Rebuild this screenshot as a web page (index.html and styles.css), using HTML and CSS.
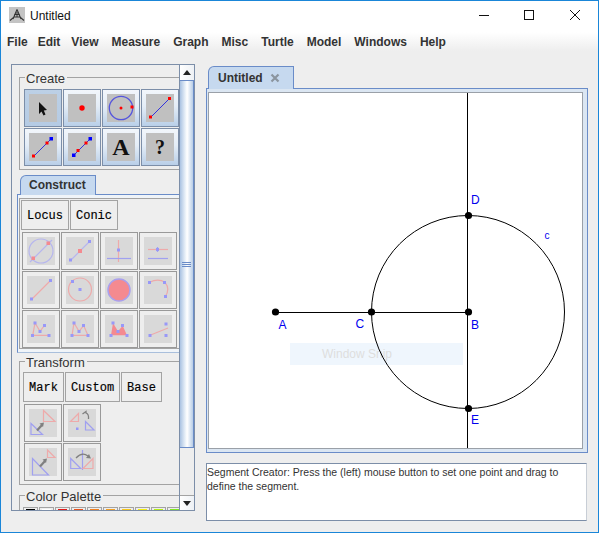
FILE: index.html
```html
<!DOCTYPE html>
<html lang="en">
<head>
<meta charset="utf-8">
<title>Untitled</title>
<link rel="stylesheet" href="styles.css">
</head>
<body>
<div class="window">
  <header class="titlebar">
    <svg class="app-icon" viewBox="0 0 16 16"><rect width="16" height="16" fill="#c4c4c4"/><path d="M8 2.500 L4 12 M8 2.500 L12 12 M1 13.500 L5 10 H11 L15 13.500" fill="none" stroke="#333" stroke-width="1.100"/><path d="M5.500 7.500 H10.500 M8 5 V10" fill="none" stroke="#333" stroke-width="1"/></svg>
    <span class="title-text">Untitled</span>
    <div class="win-controls">
      <svg class="win-btn win-min" viewBox="0 0 10 10"><path d="M0 5.500 H10" stroke="#111" fill="none"/></svg>
      <svg class="win-btn" viewBox="0 0 10 10"><rect x="0.500" y="0.500" width="9" height="9" stroke="#111" fill="none"/></svg>
      <svg class="win-btn" viewBox="0 0 10 10"><path d="M0 0 L10 10 M10 0 L0 10" stroke="#111" fill="none"/></svg>
    </div>
  </header>
  <nav class="menubar">
    <span class="m-file">File</span><span class="m-edit">Edit</span><span>View</span><span>Measure</span><span>Graph</span><span>Misc</span><span>Turtle</span><span>Model</span><span>Windows</span><span>Help</span>
  </nav>
  <main class="main">
    <aside class="toolpane">
      <div class="toolscroll">
        <section class="group group-create">
          <div class="legend">Create</div>
          <div class="icon-grid">
            <div class="tool selected"><svg class="ic" viewBox="0 0 28 28"><path d="M10 8 V20 L12.500 17.500 L14.500 21.500 L16.500 20.500 L14.800 16.500 L18 16 Z" fill="#111"/></svg></div>
            <div class="tool"><svg class="ic" viewBox="0 0 28 28"><circle cx="14" cy="14" r="2.700" fill="#f00"/></svg></div>
            <div class="tool"><svg class="ic" viewBox="0 0 28 28"><circle cx="14" cy="14" r="11.700" fill="none" stroke="#5555dd" stroke-width="1.300"/><circle cx="14" cy="14" r="1.500" fill="#f00"/><rect x="23.500" y="11.500" width="3" height="3" fill="#f00"/></svg></div>
            <div class="tool"><svg class="ic" viewBox="0 0 28 28"><path d="M5 23 L23 5" stroke="#3333dd" fill="none"/><rect x="3" y="21.500" width="3" height="3" fill="#f00"/><rect x="22" y="3" width="3" height="3" fill="#f00"/></svg></div>
            <div class="tool"><svg class="ic" viewBox="0 0 28 28"><path d="M5 23 L22 6" stroke="#3333dd" fill="none"/><rect x="3" y="21.500" width="3" height="3" fill="#f00"/><rect x="16.500" y="8.500" width="3" height="3" fill="#f00"/><rect x="20.500" y="4" width="3.500" height="3.500" fill="#00f"/></svg></div>
            <div class="tool"><svg class="ic" viewBox="0 0 28 28"><path d="M6 22 L22 6" stroke="#3333dd" fill="none"/><rect x="4" y="20.500" width="3.500" height="3.500" fill="#00f"/><rect x="8.500" y="16" width="3" height="3" fill="#f00"/><rect x="16.500" y="8.500" width="3" height="3" fill="#f00"/><rect x="20.500" y="4" width="3.500" height="3.500" fill="#00f"/></svg></div>
            <div class="tool"><span class="glyph glyph-a">A</span></div>
            <div class="tool"><span class="glyph">?</span></div>
          </div>
        </section>

        <div class="tab tab-construct">Construct</div>
        <section class="tabpanel">
          <div class="inner">
            <div class="text-row">
              <div class="text-btn w48">Locus</div>
              <div class="text-btn w48">Conic</div>
            </div>
            <div class="icon-grid plain">
              <div class="tool off"><svg class="ic" viewBox="0 0 28 28"><circle cx="14" cy="14" r="12" class="bl"/><path d="M3 25 L25 3" class="bl"/><rect x="4.500" y="19.500" width="3.500" height="3.500" class="rf"/><rect x="19.500" y="4.500" width="3.500" height="3.500" class="rf"/></svg></div>
              <div class="tool off"><svg class="ic" viewBox="0 0 28 28"><path d="M5 23 L23 5" class="bl"/><rect x="3" y="21.500" width="3" height="3" class="bf"/><rect x="22" y="3" width="3" height="3" class="bf"/><rect x="12" y="12" width="4" height="4" class="rf"/></svg></div>
              <div class="tool off"><svg class="ic" viewBox="0 0 28 28"><path d="M13.500 3 V25" class="rl"/><path d="M2 21.500 H26" class="bl dark"/><rect x="12" y="11.500" width="3" height="3" class="bf"/></svg></div>
              <div class="tool off"><svg class="ic" viewBox="0 0 28 28"><path d="M4 12.500 H24" class="rl"/><path d="M4 21.500 H24" class="bl dark"/><path d="M13.500 10 V15" class="bl dark"/><rect x="12" y="11" width="3" height="3" class="bf"/></svg></div>

              <div class="tool off"><svg class="ic" viewBox="0 0 28 28"><path d="M5 23 L23 5" class="rl"/><rect x="3" y="21.500" width="3" height="3" class="bf"/><rect x="22" y="3" width="3" height="3" class="bf"/></svg></div>
              <div class="tool off"><svg class="ic" viewBox="0 0 28 28"><circle cx="14" cy="13.500" r="11.500" class="rl"/><rect x="12.500" y="12" width="3" height="3" class="bf"/><rect x="5" y="4" width="3" height="3" class="bf"/></svg></div>
              <div class="tool off"><svg class="ic" viewBox="0 0 28 28"><circle cx="14" cy="14" r="11" fill="#f48a90" stroke="#a9a0ee" stroke-width="1.500"/></svg></div>
              <div class="tool off"><svg class="ic" viewBox="0 0 28 28"><path d="M5.700 6.300 Q14 2 21 6.300 Q26.500 13 21.300 20.300" class="rl"/><rect x="4" y="5" width="3" height="3" class="bf"/><rect x="19" y="5" width="3" height="3" class="bf"/><rect x="20" y="19" width="3" height="3" class="bf"/></svg></div>

              <div class="tool off"><svg class="ic" viewBox="0 0 28 28"><path d="M5.700 20.300 L8 8 L13 16.300 L17.300 10.700 M5.700 20.300 H22" class="rl"/><g class="bf"><rect x="4" y="19" width="3" height="3"/><rect x="20.500" y="19" width="3" height="3"/><rect x="6.500" y="6.500" width="3" height="3"/><rect x="11.500" y="15" width="3" height="3"/><rect x="16" y="9" width="3" height="3"/></g></svg></div>
              <div class="tool off"><svg class="ic" viewBox="0 0 28 28"><path d="M6 20.300 L8 8 L13 16.300 L17.700 10.700 L22 20.300 Z" class="rl"/><g class="bf"><rect x="4.500" y="19" width="3" height="3"/><rect x="20.500" y="19" width="3" height="3"/><rect x="6.500" y="6.500" width="3" height="3"/><rect x="11.500" y="15" width="3" height="3"/><rect x="16" y="9" width="3" height="3"/></g></svg></div>
              <div class="tool off"><svg class="ic" viewBox="0 0 28 28"><path d="M6 20.300 L8 8 L13 16.300 L17.700 10.700 L22 20.300 Z" fill="#f48a90"/><g class="bf"><rect x="4.500" y="19" width="3" height="3"/><rect x="20.500" y="19" width="3" height="3"/><rect x="6.500" y="6.500" width="3" height="3"/><rect x="11.500" y="15" width="3" height="3"/><rect x="16" y="9" width="3" height="3"/></g></svg></div>
              <div class="tool off"><svg class="ic" viewBox="0 0 28 28"><path d="M6 20.300 L24 13" class="rl"/><g class="bf"><rect x="4.500" y="19" width="3" height="3"/><rect x="20.500" y="19" width="3" height="3"/><rect x="20.500" y="7.500" width="3" height="3"/></g></svg></div>
            </div>
          </div>
        </section>

        <section class="group group-transform">
          <div class="legend">Transform</div>
          <div class="text-row">
            <div class="text-btn w41">Mark</div>
            <div class="text-btn w55">Custom</div>
            <div class="text-btn w41">Base</div>
          </div>
          <div class="icon-grid plain two">
            <div class="tool off"><svg class="ic" viewBox="0 0 28 28"><path d="M14.500 1.500 V12.500 H26 Z" class="rl"/><path d="M2 14.500 V25.500 H13.500 Z" class="bl dark"/><path d="M8 21.500 L13 16" class="gr"/><path d="M15 13.500 L14 18 L10.500 14.500 Z" fill="#808080"/></svg></div>
            <div class="tool off"><svg class="ic" viewBox="0 0 28 28"><path d="M10.500 4.500 V12.500 H2.500 Z" class="rl"/><path d="M17.500 12.500 V21 H26 Z" class="bl dark"/><rect x="8" y="18.500" width="2.500" height="2.500" class="bf"/><path d="M14.500 5 L18 2.500 V4 Q21 5 20.500 10" class="gr thin"/></svg></div>
            <div class="tool off"><svg class="ic" viewBox="0 0 28 28"><path d="M18.500 2 V9.500 H26 Z" class="rl"/><path d="M3.500 10.500 V27 H19.500 Z" class="bl dark"/><path d="M11 18.500 L16 13" class="gr"/><path d="M18 10.500 L17 15 L13.500 11.500 Z" fill="#808080"/></svg></div>
            <div class="tool off"><svg class="ic" viewBox="0 0 28 28"><path d="M14.500 2 V22" class="bl dark"/><path d="M2.700 20.500 V10.500 L12.700 20.500 Z" class="bl dark"/><path d="M25 20.500 V10.500 L15 20.500 Z" class="rl"/><path d="M8 10 Q14 3.500 20 8" class="gr thin"/><path d="M23 10.500 L18 10 L21 6 Z" fill="#808080"/></svg></div>
          </div>
        </section>

        <section class="group group-palette">
          <div class="legend">Color Palette</div>
          <div class="swatches">
            <div class="swatch c1"></div><div class="swatch c2"></div><div class="swatch c3"></div><div class="swatch c4"></div><div class="swatch c5"></div><div class="swatch c6"></div><div class="swatch c7"></div><div class="swatch c8"></div><div class="swatch c9"></div><div class="swatch c10"></div>
          </div>
        </section>
      </div>
      <div class="scrollbar">
        <div class="sb-btn"><span class="arrow-up"></span></div>
        <div class="sb-thumb"><span class="grip"></span></div>
        <div class="sb-track"></div>
        <div class="sb-btn sb-down"><span class="arrow-down"></span></div>
      </div>
    </aside>

    <div class="workspace">
      <div class="tab tab-doc">Untitled
        <svg class="tab-close" viewBox="0 0 10 10"><path d="M1.500 1.500 L8.500 8.500 M8.500 1.500 L1.500 8.500" stroke="#8b959f" stroke-width="2.200" fill="none"/></svg>
      </div>
      <section class="docpanel">
        <div class="canvas">
          <div class="snip">Window Snip</div>
          <svg class="drawing" viewBox="209 93 374 355">
            <g fill="none" stroke="#000">
              <line x1="275.500" y1="312.500" x2="468" y2="312.500" stroke-width="1"/>
              <line x1="467.500" y1="93" x2="467.500" y2="448" stroke-width="1"/>
              <circle cx="468" cy="312" r="96.500" stroke-width="1"/>
            </g>
            <g fill="#000">
              <circle cx="275.500" cy="312" r="3.600"/>
              <circle cx="371.500" cy="312" r="3.600"/>
              <circle cx="468.500" cy="312" r="3.600"/>
              <circle cx="468.500" cy="215.500" r="3.600"/>
              <circle cx="468.500" cy="408.500" r="3.600"/>
            </g>
            <g class="labels">
              <text x="278.500" y="329">A</text>
              <text x="471" y="329">B</text>
              <text x="355.500" y="328">C</text>
              <text x="471" y="204">D</text>
              <text x="471" y="424">E</text>
              <text class="small" x="544.500" y="239">c</text>
            </g>
          </svg>
        </div>
      </section>
      <div class="status">Segment Creator: Press the (left) mouse button to set one point and drag to<br>define the segment.</div>
    </div>
  </main>
</div>
</body>
</html>
```
FILE: styles.css
```css
* { box-sizing: border-box; }
html, body { margin: 0; padding: 0; }
body { width: 599px; height: 533px; overflow: hidden; font-family: "Liberation Sans", Arial, sans-serif; }

.window {
  width: 599px; height: 533px;
  border: 1px solid #1a86d8;
  background: #eeeeee;
  display: flex; flex-direction: column;
}

.titlebar {
  height: 29px; flex: none;
  background: #fff;
  display: flex; align-items: center;
  padding: 0 0 1px 8px;
}
.app-icon { width: 16px; height: 16px; margin-right: 5px; }
.title-text { font-size: 12px; color: #111; margin-top: 2px; }
.win-controls { margin-left: auto; display: flex; gap: 36px; padding-right: 18px; }
.win-btn { width: 10px; height: 10px; display: block; }
.win-min { margin-right: -1px; }

.menubar {
  height: 23px; flex: none;
  background: linear-gradient(#ffffff 10%, #eeeeee 90%);
  display: flex; align-items: center; gap: 13px;
  padding: 0 0 0 6px;
  font-size: 12px; font-weight: 700; color: #333;
}
.m-file { margin-right: -3px; }
.m-edit { margin-right: -2px; }

.main {
  flex: 1; min-height: 0;
  display: flex; gap: 11px;
  padding: 11px 0 0 10px;
}

.toolpane {
  width: 184px; height: 447px; flex: none;
  border: 1px solid #7c8ea8;
  display: flex;
}
.toolscroll {
  width: 167px; flex: none;
  overflow: hidden;
  padding-left: 7px;
  padding-top: 12px;
}

.group { border: 1px solid #a3a3a3; width: 200px; }
.legend {
  margin-top: -7px; margin-left: 6px;
  width: fit-content;
  padding: 0 2px 0 1px;
  height: 15px; line-height: 15px;
  background: #eeeeee;
  font-size: 13px; color: #333;
}
.group-create { padding: 0 0 3px 4px; height: 93px; }
.group-create .legend { margin-bottom: 3px; margin-left: 1px; }
.group-transform { margin-top: 8px; padding: 0 0 3px 3px; height: 124px; }
.group-transform .legend { margin-left: 2px; margin-bottom: 2px; }
.group-palette { margin-top: 10px; padding-left: 3px; height: 60px; }
.group-palette .legend { margin-left: 2px; margin-bottom: 3px; }

.icon-grid { display: grid; grid-template-columns: repeat(4, 38px); grid-auto-rows: 38px; gap: 1px; }
.icon-grid.plain { margin: 2px 0 0 1px; }
.icon-grid.two { grid-template-columns: repeat(2, 38px); }

.tool {
  border: 1px solid #7c8ea8;
  background: linear-gradient(#f2f6fb, #e4edf7 45%, #b9cfe8);
  display: flex; align-items: center; justify-content: center;
  padding: 4px;
}
.tool.selected { background: linear-gradient(#bcd0e6, #b5cbe4); }
.tool.off { border: 1px solid #999; background: #eeeeee; }
.ic { width: 28px; height: 28px; display: block; background: #c0c0c0; }
.off .ic { background: #d9d9d9; }
.glyph {
  width: 28px; height: 28px; background: #c0c0c0;
  display: flex; align-items: center; justify-content: center;
  font-family: "Liberation Serif", serif; font-weight: 700; font-size: 20px; color: #111;
}
.glyph-a { font-size: 24px; }

.bl { fill: none; stroke: #b6b6ee; stroke-width: 1.200; }
.bl.dark { stroke: #a0a0f0; }
.rl { fill: none; stroke: #eeaaaa; stroke-width: 1.200; }
.bf { fill: #9898f8; }
.rf { fill: #f48a90; }
.gr { fill: none; stroke: #808080; stroke-width: 2.200; }
.gr.thin { stroke-width: 1.300; }

.tab {
  background: #c6d9ef;
  border: 1px solid #6a8cc8;
  border-bottom: 0;
  border-top-left-radius: 6px;
  font-size: 12px; font-weight: 700; color: #333;
}
.tab-construct {
  width: 76px; height: 20px;
  margin: 5px 0 0 1px;
  padding-left: 8px; line-height: 18px;
  position: relative; z-index: 1;
}
.tabpanel {
  width: 200px; height: 159px;
  margin: -1px 0 0 -2px;
  border: 1px solid #6a8cc8;
  padding: 3px 0 3px 1px;
  background: #f0f4f8;
  border-bottom-color: #a9bfdc;
}
.inner { border: 1px solid #a3a3a3; background: #eeeeee; height: 151px; padding: 1px 0 0 1px; }

.text-row { display: flex; gap: 1px; }
.text-btn {
  height: 30px;
  border: 1px solid #a3a3a3;
  display: flex; align-items: center; justify-content: center;
  padding-top: 2px;
  font-family: "Liberation Mono", monospace; font-size: 12px; color: #000;
  -webkit-text-stroke: 0.15px #000;
}
.w48 { width: 48px; }
.w41 { width: 41px; }
.w55 { width: 55px; }

.swatches { display: flex; gap: 1px; }
.swatch { width: 15px; height: 12px; border: 1px solid #a3a3a3; padding: 1px 2px; flex: none; background-clip: content-box; }
.c1 { background-color: #000; }
.c2 { background-color: #fff; }
.c3 { background-color: #e01818; }
.c4 { background-color: #e8501c; }
.c5 { background-color: #f08020; }
.c6 { background-color: #f4a020; }
.c7 { background-color: #f8c818; }
.c8 { background-color: #f4f010; }
.c9 { background-color: #b4f010; }
.c10 { background-color: #80e820; }

.scrollbar {
  width: 15px; flex: none;
  display: flex; flex-direction: column;
  border-left: 1px solid #7c8ea8;
  background: #eeeeee;
}
.sb-btn {
  height: 15px; flex: none;
  display: flex; align-items: center; justify-content: center;
  background: linear-gradient(90deg, #fff, #eef1f5);
}
.sb-down { border-top: 1px solid #a3a3a3; }
.arrow-up { border: 4px solid transparent; border-top: 0; border-bottom: 5px solid #222; width: 0; height: 0; }
.arrow-down { border: 4px solid transparent; border-bottom: 0; border-top: 5px solid #222; width: 0; height: 0; }
.sb-thumb {
  height: 368px; flex: none;
  border: 1px solid #6a8cc8;
  border-left: 0;
  background: linear-gradient(90deg, #a9c2e2, #e8f0f8 40%, #ffffff 55%, #b8cde6);
  display: flex; align-items: center; justify-content: center;
}
.grip { width: 9px; height: 5px; border-top: 1px solid #6a8cc8; border-bottom: 1px solid #6a8cc8; background: linear-gradient(transparent 1px, #6a8cc8 1px, #6a8cc8 2px, transparent 2px); }
.sb-track { flex: 1; }

.workspace { width: 382px; flex: none; padding-top: 2px; }
.tab-doc {
  width: 86px; height: 23px;
  margin-left: 2px;
  display: flex; align-items: center;
  padding: 0 0 1px 9px;
  position: relative; z-index: 1;
  margin-bottom: -1px;
}
.tab-close { width: 10px; height: 10px; margin-left: 7px; }
.docpanel {
  height: 365px;
  border: 1px solid #6a8cc8;
  background: #dbe6f2;
  padding: 3px 4px 4px 1px;
}
.canvas {
  height: 357px;
  border: 1px solid #9aa0a8;
  background: #fff;
  position: relative;
}
.drawing { width: 374px; height: 355px; display: block; position: relative; }
.labels text { font-family: "Liberation Sans", sans-serif; font-size: 12px; fill: #0000ee; }
.labels .small { font-size: 10px; }
.snip {
  position: absolute; left: 81px; top: 250px;
  width: 173px; height: 22px;
  background: #eff6fd; color: #dedede;
  font-size: 12px; line-height: 22px; padding-left: 32px;
}

.status {
  margin-top: 10px;
  width: 381px; height: 58px;
  border: 1px solid #7c8ea8;
  border-right-color: #c8ced6;
  background: #fff;
  font-size: 10.5px; line-height: 14px; color: #333;
  padding: 1px 0;
  white-space: nowrap;
}
```
